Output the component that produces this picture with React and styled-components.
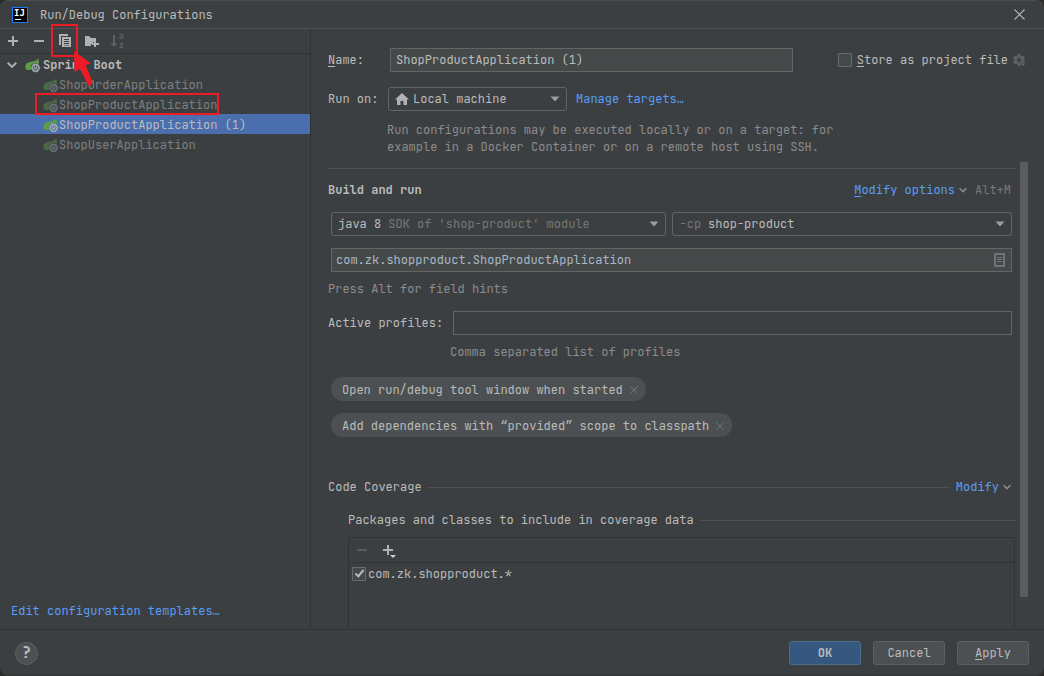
import { useState } from 'react';
import styled, { createGlobalStyle, css } from 'styled-components';

const APPS = [
  'ShopOrderApplication',
  'ShopProductApplication',
  'ShopProductApplication (1)',
  'ShopUserApplication',
];

function SpringIcon({ dim, bg = '#3c3f41' }) {
  return (
    <Icon viewBox="0 0 16 16" $dim={dim}>
      <path
        d="M13.2 1.4C14.6 5 14.2 9 11.6 11.4C9 13.4 5 13.2 2 13C-0.2 12 0 8.6 1.2 7C3.6 3.8 10 5.8 13.2 1.4Z"
        fill="#5a9e46"
      />
      <circle cx="10.6" cy="10.8" r="5" fill={bg} />
      <path
        d="M8.5 6.9h4.2l2.3 3.9-2.3 3.9H8.5l-2.3-3.9z"
        fill="#9aa7b0"
        stroke="#9aa7b0"
        strokeWidth="0.8"
        strokeLinejoin="round"
      />
      <path
        d="M9.2 9.2a2.2 2.2 0 1 0 2.8 0M10.6 8.2v2.6"
        fill="none"
        stroke={bg}
        strokeWidth="0.9"
      />
    </Icon>
  );
}

function Chevron({ size = 8, color = '#8c8c8c' }) {
  return (
    <svg width={size} height={size} viewBox="0 0 8 8" aria-hidden="true">
      <path d="M0.6 2.2L4 5.6L7.4 2.2" fill="none" stroke={color} strokeWidth="1.5" />
    </svg>
  );
}

function Arrow() {
  return (
    <ArrowIcon viewBox="0 0 10 6" aria-hidden="true">
      <path d="M0.5 0.5h9L5 5.5z" fill="#9a9da0" />
    </ArrowIcon>
  );
}

function Cross() {
  return (
    <svg width="8" height="8" viewBox="0 0 8 8" aria-hidden="true">
      <path d="M0.5 0.5l7 7M7.5 0.5l-7 7" stroke="#6e7274" strokeWidth="1" />
    </svg>
  );
}

function Sidebar() {
  const [selected, setSelected] = useState(APPS[2]);

  return (
    <Side>
      <Toolbar>
        <ToolButton aria-label="Add">
          <Icon viewBox="0 0 16 16">
            <path d="M7 3h2v4h4v2H9v4H7V9H3V7h4z" fill="#afb1b3" />
          </Icon>
        </ToolButton>
        <ToolButton aria-label="Remove">
          <Icon viewBox="0 0 16 16">
            <path d="M3 7h10v2H3z" fill="#afb1b3" />
          </Icon>
        </ToolButton>
        <ToolButton aria-label="Copy">
          <Icon viewBox="0 0 16 16">
            <path d="M2 1h9v2H4v9H2z" fill="#afb1b3" />
            <path
              d="M5 4h9v10H5zM7 6v1h5V6zM7 8v1h5V8zM7 10v1h5v-1zM7 12v.6h5V12z"
              fill="#afb1b3"
              fillRule="evenodd"
            />
          </Icon>
          <Highlight $inset="-9px -5px -8px -6px" />
          <Pointer viewBox="0 0 20 38" aria-hidden="true">
            <path
              d="M1 1L18 13.5L12.5 15L19.5 32Q19 36 15 35L7 19L1.5 22Z"
              fill="#ed1c24"
            />
          </Pointer>
        </ToolButton>
        <ToolButton aria-label="New folder">
          <Icon viewBox="0 0 16 16">
            <path d="M2 3h4l2 2h5v4h-3v2H8v2H2z" fill="#afb1b3" />
            <path d="M11 8h2v2h3v2h-3v2h-2v-2H9v-2h2z" fill="#afb1b3" />
          </Icon>
        </ToolButton>
        <ToolButton aria-label="Sort" disabled>
          <Icon viewBox="0 0 16 16">
            <path d="M4 2h2v8h2.5L5 14l-3.5-4H4z" fill="#5e6163" />
            <IconText x="10" y="6">a</IconText>
            <IconText x="10" y="15">z</IconText>
          </Icon>
        </ToolButton>
      </Toolbar>
      <Tree>
        <GroupRow>
          <Chevron size={10} color="#afb1b3" />
          <SpringIcon />
          Spring Boot
        </GroupRow>
        {APPS.map((name, i) => (
          <AppRow
            key={name}
            $selected={name === selected}
            onClick={() => setSelected(name)}
          >
            <SpringIcon
              dim={name !== selected}
              bg={name === selected ? '#4b6eaf' : '#3c3f41'}
            />
            {name}
            {i === 1 && <Highlight $inset="-1px 91px -1px 35px" />}
          </AppRow>
        ))}
      </Tree>
      <TemplatesLink href="#templates">Edit configuration templates…</TemplatesLink>
    </Side>
  );
}

function Header() {
  return (
    <HeaderForm>
      <Row>
        <RowLabel htmlFor="name">
          <u>N</u>ame:
        </RowLabel>
        <NameInput id="name" defaultValue="ShopProductApplication (1)" />
        <StoreLabel>
          <Checkbox type="checkbox" />
          <span>
            <u>S</u>tore as project file
          </span>
        </StoreLabel>
        <Gear viewBox="0 0 16 16" aria-hidden="true">
          <path
            d="M6.3 1h3.4l.4 2 1.2.7 2-.7 1.6 2.9L13.4 7.3v1.4l1.5 1.3-1.6 2.9-2-.7-1.2.7-.4 2H6.3l-.4-2-1.2-.7-2 .7L1.1 10l1.5-1.3V7.3L1.1 5.9 2.7 3l2 .7L5.9 3zM8 5.7a2.3 2.3 0 1 0 0 4.6 2.3 2.3 0 1 0 0-4.6z"
            fill="#5d6062"
            fillRule="evenodd"
          />
          <path d="M9.5 11.8H16l-3.2 3.4z" fill="#66696b" stroke="#3c3f41" strokeWidth="0.5" />
        </Gear>
      </Row>
      <Row>
        <RowLabel htmlFor="target" $narrow>Run on:</RowLabel>
        <TargetCombo>
          <HomeIcon viewBox="0 0 14 12" aria-hidden="true">
            <path d="M7 0L14 6.5H12V12H8.5V8H5.5V12H2V6.5H0z" fill="#afb1b3" />
          </HomeIcon>
          <Select id="target">
            <option>Local machine</option>
          </Select>
          <Arrow />
        </TargetCombo>
        <Link href="#targets">Manage targets…</Link>
      </Row>
      <TargetHelp>
        Run configurations may be executed locally or on a target: for
        <br />
        example in a Docker Container or on a remote host using SSH.
      </TargetHelp>
    </HeaderForm>
  );
}

function BuildAndRun() {
  return (
    <>
      <SectionHead>
        <SectionTitle>Build and run</SectionTitle>
        <Link href="#options">
          <u>M</u>odify options
        </Link>
        <Chevron />
        <Shortcut>Alt+M</Shortcut>
      </SectionHead>
      <Fields>
        <Combos>
          <Combo>
            <Select aria-label="JRE">
              <option>java 8</option>
            </Select>
            <Muted>SDK of 'shop-product' module</Muted>
            <Arrow />
          </Combo>
          <Combo>
            <Muted>-cp</Muted>
            <Select aria-label="Module classpath">
              <option>shop-product</option>
            </Select>
            <Arrow />
          </Combo>
        </Combos>
        <ClassField>
          <ClassInput
            aria-label="Main class"
            defaultValue="com.zk.shopproduct.ShopProductApplication"
          />
          <BrowseButton aria-label="Browse">
            <svg width="11" height="14" viewBox="0 0 11 14">
              <path d="M1 1h9v12H1z" fill="none" stroke="#6f7375" strokeWidth="2" />
              <path d="M3 4.5h5M3 6.5h5M3 8.5h5" stroke="#6f7375" strokeWidth="1" />
            </svg>
          </BrowseButton>
        </ClassField>
      </Fields>
      <Hint>Press Alt for field hints</Hint>
      <ProfilesRow>
        <label htmlFor="profiles">Active profiles:</label>
        <ProfilesInput id="profiles" />
      </ProfilesRow>
      <ProfilesHint>Comma separated list of profiles</ProfilesHint>
      <Chips>
        <Chip>
          Open run/debug tool window when started
          <ChipClose aria-label="Remove option"><Cross /></ChipClose>
        </Chip>
        <Chip>
          Add dependencies with “provided” scope to classpath
          <ChipClose aria-label="Remove option"><Cross /></ChipClose>
        </Chip>
      </Chips>
    </>
  );
}

function Coverage() {
  return (
    <>
      <CoverageHead>
        Code Coverage
        <Line />
        <Modify>
          <Link href="#modify">Modify</Link>
          <Chevron />
        </Modify>
      </CoverageHead>
      <PackagesHead>
        Packages and classes to include in coverage data
        <Line />
      </PackagesHead>
      <PackageBox>
        <PackageToolbar>
          <ToolButton aria-label="Remove package" disabled>
            <Icon viewBox="0 0 16 16">
              <path d="M3 7h10v2H3z" fill="#5b5d5f" />
            </Icon>
          </ToolButton>
          <ToolButton aria-label="Add package">
            <Icon viewBox="0 0 16 16">
              <path d="M7 3h2v4h4v2H9v4H7V9H3V7h4z" fill="#afb1b3" />
              <path d="M10 13h6l-3 3z" fill="#d0d2d4" />
            </Icon>
          </ToolButton>
        </PackageToolbar>
        <PackageRow>
          <Checkbox type="checkbox" defaultChecked />
          com.zk.shopproduct.*
        </PackageRow>
      </PackageBox>
    </>
  );
}

function App() {
  return (
    <>
      <GlobalStyle />
      <Window>
        <TitleBar>
          <Logo viewBox="0 0 16 16" aria-hidden="true">
            <rect x="0.5" y="0.5" width="15" height="15" fill="#000" stroke="#1a7cf0" />
            <LogoText x="2" y="9">IJ</LogoText>
            <path d="M3 12h6v1H3z" fill="#fff" />
          </Logo>
          <Title>Run/Debug Configurations</Title>
          <CloseButton aria-label="Close">
            <svg width="11" height="11" viewBox="0 0 11 11">
              <path d="M0.5 0.5l10 10M10.5 0.5l-10 10" stroke="#b4b6b8" strokeWidth="1.1" />
            </svg>
          </CloseButton>
        </TitleBar>
        <Body>
          <Sidebar />
          <Main>
            <Header />
            <ScrollArea>
              <Content>
                <BuildAndRun />
                <Coverage />
              </Content>
              <Thumb />
            </ScrollArea>
          </Main>
        </Body>
        <Footer>
          <HelpButton aria-label="Help">?</HelpButton>
          <Button $primary>OK</Button>
          <Button>Cancel</Button>
          <Button>
            <u>A</u>pply
          </Button>
        </Footer>
      </Window>
    </>
  );
}

const GlobalStyle = createGlobalStyle`
  *, *::after {
    box-sizing: border-box;
  }
  body {
    margin: 0;
    background: #2b2b2b;
  }
  body, button, input, select {
    color: #bbbbbb;
    font-family: 'JetBrains Mono', 'DejaVu Sans Mono', monospace;
    font-size: 12px;
    line-height: 16px;
  }
  button, input, select {
    margin: 0;
    padding: 0;
    border: 0;
    outline: 0;
    background: none;
  }
  u {
    text-underline-offset: 2px;
  }
  svg {
    display: block;
    flex: none;
  }
`;

const Window = styled.div`
  display: flex;
  flex-direction: column;
  height: 100vh;
  border-top: 1px solid #4b4b4b;
  border-bottom: 1px solid #343638;
  border-radius: 8px;
  background: #3c3f41;
  overflow: hidden;
  white-space: nowrap;
`;

const TitleBar = styled.header`
  display: flex;
  align-items: center;
  flex: none;
  height: 28px;
  padding: 0 15px 0 12px;
  border-bottom: 1px solid #515151;
`;

const Logo = styled.svg`
  width: 16px;
  height: 16px;
`;

const LogoText = styled.text`
  fill: #fff;
  font-family: 'DejaVu Sans Mono', monospace;
  font-size: 9px;
  font-weight: 700;
`;

const Title = styled.h1`
  flex: 1;
  margin: 0 0 0 12px;
  font-size: 12px;
  font-weight: 400;
`;

const CloseButton = styled.button`
  padding: 4px;
`;

const Body = styled.div`
  display: flex;
  flex: 1;
  min-height: 0;
`;

const Side = styled.aside`
  display: flex;
  flex-direction: column;
  flex: none;
  width: 311px;
  border-right: 1px solid #323232;
`;

const Toolbar = styled.div`
  display: flex;
  align-items: center;
  gap: 10px;
  height: 25px;
  padding-left: 5px;
  border-bottom: 1px solid #323232;
`;

const ToolButton = styled.button`
  position: relative;
  width: 16px;
  height: 16px;
`;

const Icon = styled.svg`
  width: 16px;
  height: 16px;
  opacity: ${({ $dim }) => ($dim ? 0.45 : 1)};
`;

const IconText = styled.text`
  fill: #5e6163;
  font-family: 'DejaVu Sans Mono', monospace;
  font-size: 8px;
  font-weight: 700;
  line-height: 8px;
`;

const Highlight = styled.span`
  position: absolute;
  z-index: 1;
  inset: ${({ $inset }) => $inset};
  border: 2px solid #ed1c24;
`;

const Pointer = styled.svg`
  position: absolute;
  top: 17px;
  left: 16px;
  z-index: 1;
  width: 20px;
  height: 38px;
`;

const Tree = styled.ul`
  flex: 1;
  margin: 0;
  padding: 0;
  list-style: none;
`;

const GroupRow = styled.li`
  display: flex;
  align-items: center;
  height: 20px;
  padding: 2px 0 0 7px;
  font-weight: 700;
  & > svg + svg {
    margin: 0 2px 0 8px;
  }
`;

const AppRow = styled.li`
  position: relative;
  display: flex;
  align-items: center;
  height: 20px;
  padding: 2px 0 0 43px;
  color: ${({ $selected }) => ($selected ? '#bbbbbb' : '#7d7f80')};
  background: ${({ $selected }) => ($selected ? '#4b6eaf' : 'none')};
`;

const Link = styled.a`
  color: #589df6;
  text-decoration: none;
`;

const TemplatesLink = styled(Link)`
  margin: 0 11px 10px;
`;

const Main = styled.main`
  display: flex;
  flex-direction: column;
  flex: 1;
  min-width: 0;
`;

const HeaderForm = styled.div`
  display: flex;
  flex-direction: column;
  gap: 15px;
  padding: 19px 18px 6px 17px;
`;

const Row = styled.div`
  display: flex;
  align-items: center;
  height: 24px;
`;

const RowLabel = styled.label`
  flex: none;
  width: ${({ $narrow }) => ($narrow ? '60px' : '62px')};
`;

const fieldStyle = css`
  height: 24px;
  padding: 0 5px;
  border: 1px solid #646464;
  background: #45494a;
`;

const NameInput = styled.input`
  ${fieldStyle}
  flex: 1;
  min-width: 0;
`;

const StoreLabel = styled.label`
  display: flex;
  align-items: center;
  gap: 5px;
  margin-left: 45px;
`;

const Checkbox = styled.input`
  appearance: none;
  flex: none;
  width: 14px;
  height: 14px;
  border: 1px solid #6b6b6b;
  border-radius: 1px;
  background: #43494a;
  &:checked::after {
    content: '';
    display: block;
    width: 5px;
    height: 9px;
    margin: 0 0 0 4px;
    border: solid #bbbbbb;
    border-width: 0 2px 2px 0;
    transform: rotate(40deg);
  }
`;

const Gear = styled.svg`
  width: 14px;
  height: 14px;
  margin-left: 4px;
`;

const Combo = styled.div`
  display: flex;
  align-items: center;
  gap: 7px;
  min-width: 0;
  height: 24px;
  padding: 0 6px;
  border: 1px solid #646464;
  border-radius: 3px;
`;

const TargetCombo = styled(Combo)`
  gap: 4px;
  width: 179px;
  margin-right: 9px;
`;

const Select = styled.select`
  appearance: none;
  field-sizing: content;
`;

const ArrowIcon = styled.svg`
  width: 10px;
  height: 6px;
  margin-left: auto;
`;

const HomeIcon = styled.svg`
  width: 14px;
  height: 12px;
`;

const Muted = styled.span`
  color: #777777;
`;

const Hint = styled.p`
  margin: 9px 0 0;
  color: #8c8c8c;
`;

const TargetHelp = styled(Hint)`
  margin: -4px 0 0 59px;
  line-height: 17px;
`;

const ScrollArea = styled.div`
  display: flex;
  gap: 5px;
  flex: 1;
  min-height: 0;
  padding: 0 16px 0 17px;
  overflow: hidden;
`;

const Content = styled.div`
  display: flex;
  flex-direction: column;
  flex: 1;
  min-width: 0;
  padding-top: 6px;
`;

const Thumb = styled.div`
  flex: none;
  width: 8px;
  margin-bottom: 32px;
  background: #595b5d;
`;

const SectionHead = styled.div`
  display: flex;
  align-items: center;
  gap: 4px;
  padding: 13px 4px 14px 0;
  border-top: 1px solid #515151;
`;

const SectionTitle = styled.h2`
  flex: 1;
  margin: 0;
  font-size: 12px;
`;

const Shortcut = styled.span`
  margin-left: 4px;
  color: #777777;
`;

const Fields = styled.div`
  display: flex;
  flex-direction: column;
  gap: 12px;
  margin: 0 3px;
`;

const Combos = styled.div`
  display: grid;
  grid-template-columns: 335fr 339fr;
  gap: 6px;
`;

const ClassField = styled.div`
  ${fieldStyle}
  display: flex;
  align-items: center;
  padding-left: 4px;
`;

const ClassInput = styled.input`
  flex: 1;
  min-width: 0;
  color: #a9b7c6;
`;

const BrowseButton = styled.button`
  padding: 0 1px;
`;

const ProfilesRow = styled.div`
  display: flex;
  align-items: center;
  margin: 14px 3px 0 0;
  & > label {
    flex: none;
    width: 125px;
  }
`;

const ProfilesInput = styled.input`
  ${fieldStyle}
  flex: 1;
  min-width: 0;
  background: none;
`;

const ProfilesHint = styled(Hint)`
  margin-left: 122px;
`;

const Chips = styled.div`
  display: flex;
  flex-direction: column;
  align-items: flex-start;
  gap: 12px;
  margin: 17px 3px 0;
`;

const Chip = styled.div`
  display: flex;
  align-items: center;
  gap: 7px;
  height: 24px;
  padding: 2px 8px 0 11px;
  border-radius: 12px;
  background: #4c5052;
`;

const ChipClose = styled.button`
  flex: none;
`;

const CoverageHead = styled.div`
  display: flex;
  align-items: center;
  gap: 6px;
  margin: 42px 4px 0 0;
`;

const Modify = styled.span`
  display: flex;
  align-items: center;
  gap: 4px;
`;

const Line = styled.span`
  flex: 1;
  height: 1px;
  background: #515151;
`;

const PackagesHead = styled.div`
  display: flex;
  align-items: center;
  gap: 6px;
  margin: 17px 0 0 20px;
`;

const PackageBox = styled.div`
  flex: 1;
  margin: 9px 0 0 20px;
  border: 1px solid #323232;
  border-bottom: 0;
`;

const PackageToolbar = styled.div`
  display: flex;
  align-items: center;
  gap: 10px;
  height: 25px;
  padding-left: 5px;
  border-bottom: 1px solid #323232;
`;

const PackageRow = styled.label`
  display: flex;
  align-items: center;
  gap: 2px;
  height: 22px;
  padding-left: 3px;
`;

const Footer = styled.footer`
  display: flex;
  align-items: center;
  gap: 12px;
  flex: none;
  height: 46px;
  padding: 1px 15px 0;
  border-top: 1px solid #323232;
`;

const HelpButton = styled.button`
  width: 23px;
  height: 23px;
  margin-right: auto;
  border: 1px solid #5e6060;
  border-radius: 50%;
  background: #4c5052;
  font-size: 16px;
  font-weight: 700;
`;

const Button = styled.button`
  width: 72px;
  height: 24px;
  border: 1px solid ${({ $primary }) => ($primary ? '#4c708c' : '#5e6060')};
  border-radius: 3px;
  background: ${({ $primary }) => ($primary ? '#365880' : '#4c5052')};
  font-weight: ${({ $primary }) => ($primary ? 700 : 400)};
`;

export default App;
